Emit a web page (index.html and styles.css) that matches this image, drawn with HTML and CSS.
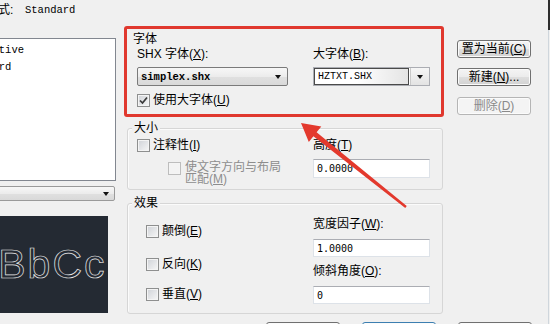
FILE: index.html
```html
<!DOCTYPE html>
<html lang="zh-CN">
<head>
<meta charset="utf-8">
<title>文字样式</title>
<link rel="stylesheet" href="styles.css">
</head>
<body>
<div class="page">
  <div class="top"><span class="cur">当前文字样式:</span><span class="std">Standard</span></div>
  <div class="main">
    <div class="left">
      <div class="list">
        <div class="item">Annotative</div>
        <div class="item">Standard</div>
      </div>
      <div class="combo small"><span class="ctext">所有样式</span><i class="arr"></i></div>
      <div class="preview"><span class="ptext"><span class="aa">Aa</span>BbCc</span></div>
    </div>
    <div class="mid">
      <div class="font-group">
        <div class="legend-top">字体</div>
        <div class="fg-grid">
          <div class="col1">
            <div class="lbl">SHX 字体(<u>X</u>):</div>
            <div class="combo"><span class="ctext mono-b">simplex.shx</span><i class="arr"></i></div>
            <div class="chk-row"><span class="cb"><svg width="11" height="11" viewBox="0 0 11 11"><path d="M2 5.5 L4.5 8 L9 2.5" fill="none" stroke="#3a3a3a" stroke-width="1.7"/></svg></span>使用大字体(<u>U</u>)</div>
          </div>
          <div class="col2">
            <div class="lbl">大字体(<u>B</u>):</div>
            <div class="combo edit"><span class="field">HZTXT.SHX</span><span class="abtn"><i class="arr"></i></span></div>
          </div>
        </div>
      </div>
      <div class="group size">
        <div class="legend">大小</div>
        <div class="gcontent">
          <div class="scol1">
            <div class="chk-row"><span class="cb"></span>注释性(<u>I</u>)</div>
            <div class="chk-row sub disabled"><span class="cb"></span><span class="wrap">使文字方向与布局匹配(<u>M</u>)</span></div>
          </div>
          <div class="col2">
            <div class="lbl">高度(<u>T</u>)</div>
            <div class="input">0.0000</div>
          </div>
        </div>
      </div>
      <div class="group effect">
        <div class="legend">效果</div>
        <div class="gcontent">
          <div class="ecol1">
            <div class="chk-row r1"><span class="cb"></span>颠倒(<u>E</u>)</div>
            <div class="chk-row r2"><span class="cb"></span>反向(<u>K</u>)</div>
            <div class="chk-row r3"><span class="cb"></span>垂直(<u>V</u>)</div>
          </div>
          <div class="col2">
            <div class="lbl l1">宽度因子(<u>W</u>):</div>
            <div class="input i1">1.0000</div>
            <div class="lbl l2">倾斜角度(<u>O</u>):</div>
            <div class="input i2">0</div>
          </div>
        </div>
      </div>
    </div>
    <div class="right">
      <div class="btn b1">置为当前(<u>C</u>)</div>
      <div class="btn b2">新建(<u>N</u>)...</div>
      <div class="btn b3 off">删除(<u>D</u>)</div>
    </div>
  </div>
  <div class="bottom">
    <div class="btn">应用(<u>A</u>)</div>
    <div class="btn focus">关闭(<u>C</u>)</div>
    <div class="btn">帮助(<u>H</u>)</div>
  </div>
  <svg class="arrow" width="550" height="324" viewBox="0 0 550 324">
    <polygon points="301,123 321.3,126.5 316.6,132.3 406.75,206.1 405.25,207.9 313.4,136.3 308.8,142.1" fill="#e3392d"/>
  </svg>
</div>
</body>
</html>
```

FILE: styles.css
```css
html, body {
  margin: 0;
  padding: 0;
}
body {
  background: #f0f0f0;
  font-family: "Liberation Sans", "Noto Sans CJK SC", sans-serif;
  font-size: 12px;
  color: #000;
}
.page {
  position: relative;
  width: 550px;
  height: 324px;
  overflow: hidden;
  background:
    linear-gradient(#2e2e2e, #2e2e2e) 548px 0 / 2px 30px no-repeat,
    linear-gradient(#cfd6dc, #cfd6dc) 548px 0 / 1px 324px no-repeat,
    #f0f0f0;
}
u { text-decoration: underline; text-underline-offset: 1px; }

.top {
  display: flex;
  height: 20px;
  line-height: 20px;
  margin-left: -62px;
}
.cur { width: 87px; flex: none; }
.std { font-family: "Liberation Mono", monospace; font-size: 10.5px; }

.main {
  display: flex;
  align-items: flex-start;
  margin-top: 6px;
}

/* left column */
.left {
  flex: none;
  width: 160px;
  margin-left: -44px;
  padding-top: 12px;
}
.list {
  box-sizing: border-box;
  height: 143px;
  border: 1px solid #828790;
  background: #fff;
  padding: 3px 0 0 4px;
}
.item {
  font-family: "Liberation Mono", monospace;
  font-size: 10.5px;
  line-height: 17px;
}
.combo {
  box-sizing: border-box;
  display: flex;
  align-items: center;
  height: 19px;
  margin-top: 6px;
  border: 1px solid #7a7a7a;
  border-radius: 2px;
  background: linear-gradient(#f7f7f7, #ececec 50%, #e0e0e0 51%, #d9d9d9);
  padding: 0 6px 0 2px;
}
.combo .ctext { flex: 1; white-space: nowrap; overflow: hidden; }
.arr {
  display: block;
  width: 0;
  height: 0;
  border-left: 3.5px solid transparent;
  border-right: 3.5px solid transparent;
  border-top: 4px solid #111;
}
.combo.small {
  width: 159px;
  height: 15px;
  margin-top: 5px;
  padding-right: 5px;
  border-color: #9a9a9a;
}
.combo.small .ctext { text-indent: -12px; font-size: 11px; }
.preview {
  box-sizing: border-box;
  display: flex;
  justify-content: flex-end;
  width: 152px;
  height: 97px;
  margin-top: 15px;
  padding-right: 1.5px;
  background: #242a33;
  overflow: hidden;
}
.ptext {
  flex: none;
  line-height: 97px;
  font-family: "Liberation Sans", sans-serif;
  font-size: 41px;
  letter-spacing: 2px;
  color: transparent;
  -webkit-text-stroke: 0.7px #e8e8e8;
  white-space: nowrap;
}
.aa { margin-right: 12px; }

/* middle column */
.mid {
  flex: none;
  width: 320px;
  margin-left: 8px;
}
.font-group {
  box-sizing: border-box;
  height: 91px;
  border: 3px solid #e0382e;
  border-radius: 3px;
  padding-top: 3px;
}
.legend-top {
  margin-left: 6px;
  line-height: 15px;
}
.fg-grid {
  display: flex;
  gap: 25px;
  padding-left: 10px;
}
.col1 { width: 151px; flex: none; }
.col2 { width: 117px; flex: none; }
.lbl { line-height: 14px; white-space: nowrap; }
.mono-b {
  font-family: "Liberation Mono", monospace;
  font-size: 10.5px;
  font-weight: bold;
  padding-left: 1px;
}
.combo.edit {
  margin-top: 6px;
  padding: 0;
  background: #fff;
  border: 1px solid #abadb3;
  border-radius: 0;
}
.combo.edit .field {
  box-sizing: border-box;
  flex: 1;
  height: 17px;
  line-height: 15px;
  border: 1px solid #4a4a4a;
  padding-left: 3px;
  font-family: "Liberation Mono", monospace;
  font-size: 10px;
  background: linear-gradient(to right, #fff 45%, #e4e4e4 100%);
}
.combo.edit .abtn {
  box-sizing: border-box;
  width: 19px;
  height: 17px;
  display: flex;
  align-items: center;
  justify-content: center;
  margin-left: 1px;
  background: linear-gradient(#f6f6f6, #e3e3e3);
  border-left: 1px solid #c9c9c9;
}
.col1 .combo { margin-top: 6px; }

.chk-row {
  display: flex;
  align-items: center;
  line-height: 14px;
  white-space: nowrap;
}
.font-group .chk-row { margin-top: 7px; }
.cb {
  box-sizing: border-box;
  flex: none;
  width: 13px;
  height: 13px;
  margin-right: 3px;
  border: 1px solid #8e8f8f;
  background: linear-gradient(135deg, #cfd2d7, #f7f7f7);
  box-shadow: inset 0 0 0 1px #f4f4f4;
  display: flex;
  align-items: center;
  justify-content: center;
}

.group {
  box-sizing: border-box;
  margin-left: 3px;
  width: 316px;
  border: 1px solid #d6d6d6;
  border-radius: 3px;
  box-shadow: inset 1px 1px 0 #fbfbfb;
}
.legend {
  width: fit-content;
  margin: -8px 0 0 4px;
  padding: 0 2px;
  line-height: 14px;
  background: #f0f0f0;
}
.gcontent { display: flex; }

.size { margin-top: 11px; padding-bottom: 4px; }
.size .gcontent { padding-left: 9px; margin-top: 3px; }
.scol1 { width: 176px; flex: none; }
.chk-row.sub {
  align-items: flex-start;
  margin-top: 9px;
  padding-left: 31px;
  white-space: normal;
}
.chk-row.sub .cb { margin-top: 1px; margin-right: 4px; }
.wrap { width: 100px; line-height: 12px; }
.disabled { color: #8d8d8d; }
.disabled .cb { border-color: #bdbdbd; background: #f3f3f3; }

.input {
  box-sizing: border-box;
  height: 19px;
  margin-top: 7px;
  background: #fff;
  border: 1px solid #dde2e8;
  border-top-color: #abadb3;
  padding-left: 3px;
  line-height: 17px;
  font-family: "DejaVu Sans Mono", monospace;
  font-size: 10px;
}

.effect { margin-top: 13px; padding-bottom: 9px; }
.effect .gcontent { padding-left: 18px; }
.ecol1 { width: 167px; flex: none; }
.r1 { margin-top: 14px; }
.r2 { margin-top: 19px; }
.r3 { margin-top: 16px; }
.l1 { margin-top: 7px; }
.i1 { margin-top: 8px; height: 18px; }
.l2 { margin-top: 7px; }
.i2 { margin-top: 8px; height: 18px; }

/* right column */
.right {
  flex: none;
  width: 74px;
  margin-left: 13px;
}
.btn {
  box-sizing: border-box;
  height: 18px;
  border: 1px solid #707070;
  border-radius: 3px;
  background: linear-gradient(#f4f4f4, #ececec 48%, #dedede 52%, #d2d2d2);
  box-shadow: inset 0 0 0 1px #fbfbfb;
  text-align: center;
  line-height: 16px;
  white-space: nowrap;
}
.b1 { margin-top: 14px; }
.b2 { margin-top: 10px; }
.b3 { margin-top: 11px; }
.btn.off {
  color: #8a8a8a;
  border-color: #b5b5b5;
  background: #f4f4f4;
}

.bottom {
  display: flex;
  gap: 22px;
  margin-top: 8px;
  margin-left: 266px;
}
.bottom .btn { width: 74px; height: 22px; }
.bottom .btn.focus { border-color: #3c7fb1; }

.arrow {
  position: absolute;
  left: 0;
  top: 0;
  pointer-events: none;
}
```
